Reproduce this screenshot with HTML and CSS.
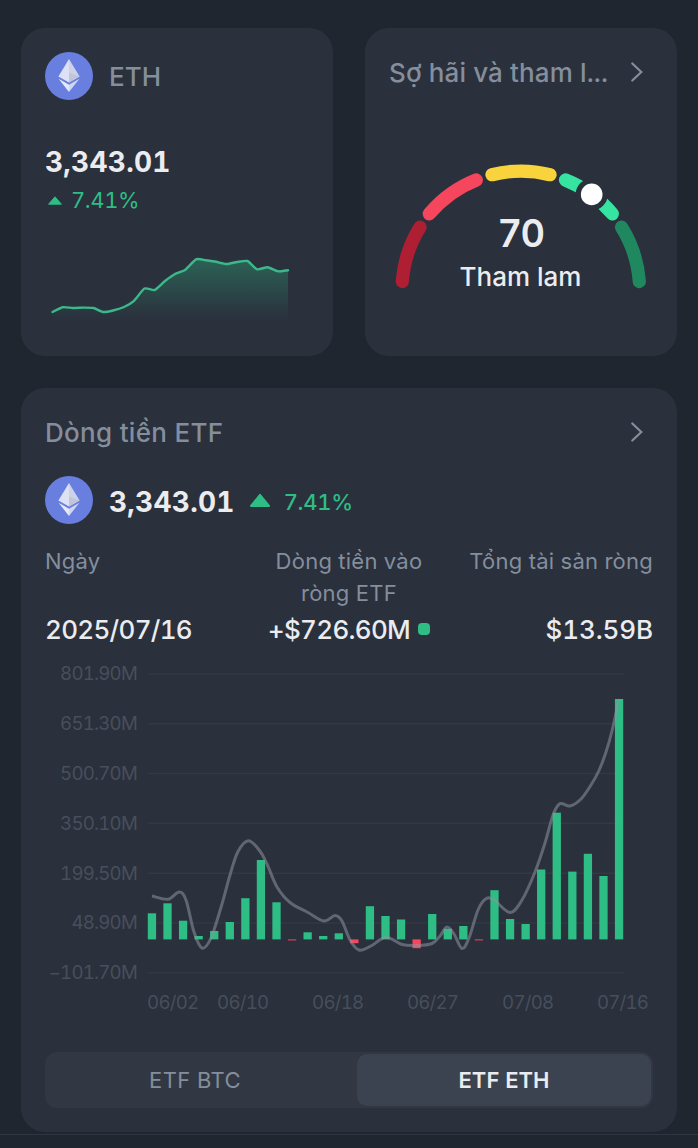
FILE: index.html
```html
<!DOCTYPE html>
<html lang="vi">
<head>
  <meta charset="UTF-8">
  <meta name="viewport" content="width=device-width, initial-scale=1">
  <title>ETF ETH</title>
  <link rel="stylesheet" href="styles.css">
</head>
<body>

  <svg class="defs" width="0" height="0">
    <symbol id="eth" viewBox="0 0 48 48">
      <circle cx="24" cy="24" r="24" fill="#697fe0"/>
      <path d="M24 7L13.4 24.4L24 30.4Z" fill="#dde1f4"/>
      <path d="M24 7L34.6 24.4L24 30.4Z" fill="#cdd2ea"/>
      <path d="M24 20.5L34.6 24.4L24 30.4Z" fill="#c0c5d8"/>
      <path d="M13.6 26.7L24 32.8V40Z" fill="#e6e9fa"/>
      <path d="M34.4 26.7L24 32.8V40Z" fill="#cfd6f5"/>
    </symbol>
    <symbol id="arrow" viewBox="0 0 12 20">
      <path d="M1.3 1.5L10.3 10L1.3 18.5" fill="none" stroke="#848e9c" stroke-width="2.2" stroke-linecap="round"/>
    </symbol>
  </svg>

  <div class="top-cards">
    <div class="card coin">
      <div class="coin-head">
        <svg class="coin-icon"><use href="#eth"/></svg>
        <span class="title">ETH</span>
      </div>
      <div class="price">3,343.01</div>
      <div class="change">
        <svg class="up-small" viewBox="0 0 14 9"><path d="M7 0.8L13.4 8.2H0.6Z" fill="#2ebd85" stroke="#2ebd85" stroke-linejoin="round"/></svg>
        <span>7.41%</span>
      </div>
      <svg class="spark" viewBox="45 250 264 76">
        <defs>
          <linearGradient id="fade" gradientUnits="userSpaceOnUse" x1="0" y1="258" x2="0" y2="320">
            <stop offset="0" stop-color="#2ebd85" stop-opacity="0.36"/>
            <stop offset="1" stop-color="#2ebd85" stop-opacity="0"/>
          </linearGradient>
        </defs>
        <path id="sparkArea" fill="url(#fade)"/>
        <path id="sparkLine" class="spark-line"/>
      </svg>
    </div>

    <div class="card">
      <div class="card-head">
        <span class="title fear">Sợ hãi và tham l...</span>
        <svg class="arrow"><use href="#arrow"/></svg>
      </div>
      <svg class="gauge" viewBox="389 150 264 150">
        <g class="arc">
          <path d="M402.3 281.5A118.8 118.8 0 0 1 420 227.2" stroke="#ae1f34"/>
          <path d="M429.3 213.8A118.8 118.8 0 0 1 476.3 180" stroke="#f6465d"/>
          <path d="M492 174.7A118.8 118.8 0 0 1 550 174.7" stroke="#f9d33b"/>
          <path d="M565.5 180A118.8 118.8 0 0 1 612.3 213.8" stroke="#37e3a0"/>
          <path d="M621.6 227.2A118.8 118.8 0 0 1 639.3 281.5" stroke="#1f885e"/>
        </g>
        <circle cx="591.7" cy="194.4" r="16" fill="#2a303c"/>
        <circle cx="591.7" cy="194.4" r="10.8" fill="#fff"/>
        <text class="score" x="520.5" y="246.5">70</text>
        <text class="mood" x="520.5" y="286">Tham lam</text>
      </svg>
    </div>
  </div>

  <div class="card etf">
    <div class="card-head">
      <span class="title flow">Dòng tiền ETF</span>
      <svg class="arrow"><use href="#arrow"/></svg>
    </div>

    <div class="quote">
      <svg class="coin-icon"><use href="#eth"/></svg>
      <span class="price">3,343.01</span>
      <svg class="up" viewBox="0 0 22 15"><path d="M11 1.8L20 13H2Z" fill="#2ebd85" stroke="#2ebd85" stroke-width="2" stroke-linejoin="round"/></svg>
      <span class="percent">7.41%</span>
    </div>

    <div class="stats">
      <div class="stat">
        <div class="label">Ngày</div>
        <div class="value">2025/07/16</div>
      </div>
      <div class="stat center">
        <div class="label">Dòng tiền vào<br>ròng ETF</div>
        <div class="value">+$726.60M<i class="dot"></i></div>
      </div>
      <div class="stat right">
        <div class="label">Tổng tài sản ròng</div>
        <div class="value">$13.59B</div>
      </div>
    </div>

    <svg class="chart" viewBox="45 655 608 370">
      <g id="grid"></g>
      <g id="bars"></g>
      <path id="trend" class="trend"/>
      <g id="dates"></g>
    </svg>

    <div class="tabs">
      <div class="tab">ETF BTC</div>
      <div class="tab active">ETF ETH</div>
    </div>
  </div>

  <div class="bottom-line"></div>

  <script src="chart.js"></script>
</body>
</html>
```
FILE: styles.css
```css
* {
  box-sizing: border-box;
}

body {
  margin: 0;
  padding: 28px 21px 0;
  height: 1148px;
  overflow: hidden;
  background-color: #1f2630;
  color: #eaecef;
  font-family: Inter, "Noto Sans", sans-serif;
  font-variant-numeric: tabular-nums;
}

svg {
  display: block;
  flex-shrink: 0;
}

.defs {
  position: absolute;
}

.top-cards {
  display: flex;
  gap: 32px;
  margin-bottom: 32px;
}

.card {
  background-color: #2a303c;
  border-radius: 24px;
  padding: 24px;
}

.top-cards .card {
  width: 312px;
  height: 328px;
}

.coin-head {
  display: flex;
  align-items: center;
  gap: 16px;
}

.coin-head .title {
  padding-top: 2px;
}

.coin-icon {
  width: 48px;
  height: 48px;
}

.title {
  color: #848e9c;
  font-size: 26px;
  font-weight: 500;
  line-height: 42px;
  white-space: nowrap;
}

.fear {
  letter-spacing: 0.12px;
}

.flow {
  letter-spacing: 0.3px;
}

.price {
  font-size: 28px;
  font-weight: 700;
  letter-spacing: 0.25px;
  line-height: 40px;
}

.coin .price {
  margin-top: 42px;
}

.change {
  display: flex;
  align-items: center;
  gap: 9px;
  height: 36px;
  padding-left: 3px;
  color: #2ebd85;
  font-size: 22px;
  letter-spacing: -0.4px;
}

.up-small {
  width: 14px;
  height: 9px;
}

.spark {
  width: 264px;
  height: 76px;
  margin-top: 32px;
}

.spark-line {
  fill: none;
  stroke: #3cb98a;
  stroke-width: 2.4;
  stroke-linecap: round;
}

.card-head {
  display: flex;
  align-items: center;
  justify-content: space-between;
  height: 42px;
}

.arrow {
  width: 12px;
  height: 20px;
  margin: 0 10px 2px 0;
}

.gauge {
  width: 264px;
  height: 150px;
  margin-top: 56px;
}

.arc path {
  fill: none;
  stroke-width: 13.3;
  stroke-linecap: round;
}

.gauge text {
  fill: #eaecef;
  text-anchor: middle;
}

.score {
  font-size: 38px;
  font-weight: 600;
  letter-spacing: -1.5px;
}

.mood {
  font-size: 26px;
  font-weight: 500;
}

.etf {
  height: 744px;
}

.quote {
  display: flex;
  align-items: center;
  height: 48px;
  margin-top: 22px;
}

.quote .price {
  margin-left: 16px;
  padding-top: 3px;
}

.up {
  width: 22px;
  height: 15px;
  margin: 0 13px 0 14px;
}

.percent {
  padding-top: 3px;
  color: #2ebd85;
  font-size: 22px;
  font-weight: 500;
  letter-spacing: -0.3px;
}

.stats {
  display: grid;
  grid-template-columns: repeat(3, 1fr);
  height: 124px;
  margin-top: 21px;
}

.stat {
  display: flex;
  flex-direction: column;
  justify-content: space-between;
}

.center {
  align-items: center;
  text-align: center;
}

.right {
  align-items: flex-end;
}

.label {
  color: #848e9c;
  font-size: 22px;
  letter-spacing: 0.25px;
  line-height: 32px;
  white-space: nowrap;
}

.value {
  display: flex;
  align-items: center;
  height: 36px;
  margin-bottom: 22px;
  font-size: 26px;
  font-weight: 500;
  letter-spacing: -0.7px;
}

.right .value {
  letter-spacing: -0.1px;
}

.dot {
  width: 12px;
  height: 12px;
  margin-left: 8px;
  border-radius: 4px;
  background-color: #2ebd85;
}

.chart {
  width: 608px;
  height: 370px;
  margin-top: -14px;
}

.chart text {
  fill: #474f5b;
  font-size: 18.7px;
  letter-spacing: -0.8px;
}

.chart line {
  stroke: #323945;
  stroke-width: 1.5;
}

.trend {
  fill: none;
  stroke: #8c949f;
  stroke-opacity: 0.55;
  stroke-width: 3;
}

.tabs {
  display: flex;
  height: 56px;
  margin-top: 27px;
  padding: 2px;
  border-radius: 12px;
  background-color: #323843;
}

.tab {
  width: 310px;
  padding-right: 14px;
  color: #848e9c;
  font-size: 22px;
  letter-spacing: 0.4px;
  line-height: 52px;
  text-align: center;
}

.tab.active {
  width: 294px;
  padding-right: 0;
  border-radius: 10px;
  background-color: #3b4350;
  color: #eaecef;
  font-weight: 600;
  letter-spacing: 0;
}

.bottom-line {
  height: 1px;
  margin: 2px -21px 0;
  background-color: #2f3541;
}
```
FILE: chart.js
```javascript
const zeroY = 939.4;

// end of every bar, above or below the zero line
const bars = [
  913.3, 903.3, 920.7, 936, 931, 922, 898.2, 860, 902.3, 940.4,
  932.3, 936, 933.3, 943.2, 906.2, 916, 919.5, 948.2, 914, 928.8,
  926, 940.4, 890.2, 919, 924, 869.5, 812.7, 871.6, 853.8, 876, 699
];

const trend = [
  [152, 896], [168, 899.3], [179, 892], [186, 900], [194, 932], [202, 948],
  [211, 938], [221.7, 905], [230, 875], [238, 851.5], [248.5, 840.7],
  [259.5, 850.5], [267, 864], [277, 887], [290, 902.5], [308, 912.5],
  [324, 921], [335, 915.5], [342, 921], [350, 940], [359, 950], [371, 946],
  [386, 937.3], [402, 944.5], [417, 945.5], [432, 943.5], [440, 936],
  [447, 927], [454, 934], [462, 948.5], [469, 938], [478, 910], [486, 898.8],
  [494, 900], [510, 912.5], [522, 900], [535, 872], [545, 843], [553, 815],
  [560, 803.7], [570, 806], [581, 799], [591, 785], [599, 770.5],
  [606, 752], [612, 731], [619, 699]
];

const spark = [
  [52.5, 312], [62.7, 307.2], [73, 308], [83.5, 307.6], [93.5, 308], [103, 312],
  [113, 310.5], [124, 307], [134, 300.8], [144.5, 288.5], [154.5, 290],
  [165, 281], [175, 274], [185, 270], [196, 259.3], [206, 260.3],
  [216, 261.8], [226.5, 264], [237, 262], [247.5, 261], [257, 269.3],
  [267.5, 267.3], [278, 271.3], [288, 270.3]
];

const gridLines = [
  ['801.90M', 674], ['651.30M', 723.7], ['500.70M', 773.5], ['350.10M', 823.3],
  ['199.50M', 873.2], ['48.90M', 923], ['−101.70M', 972.8]
];

const dates = [
  ['06/02', 172.7], ['06/10', 242.7], ['06/18', 337.7],
  ['06/27', 432.5], ['07/08', 527.7], ['07/16', 622.5]
];

function smooth(points, t) {
  let d = 'M' + points[0];
  for (let i = 0; i < points.length - 1; i++) {
    const p0 = points[i - 1] || points[i];
    const p1 = points[i];
    const p2 = points[i + 1];
    const p3 = points[i + 2] || p2;
    d += ` C${p1[0] + (p2[0] - p0[0]) * t} ${p1[1] + (p2[1] - p0[1]) * t}`;
    d += ` ${p2[0] - (p3[0] - p1[0]) * t} ${p2[1] - (p3[1] - p1[1]) * t}`;
    d += ` ${p2[0]} ${p2[1]}`;
  }
  return d;
}

document.getElementById('bars').innerHTML = bars.map((y, i) => {
  const up = y < zeroY;
  return `<rect x="${147.8 + i * 15.57}" y="${Math.min(y, zeroY)}" width="8.3" height="${Math.abs(y - zeroY)}" fill="${up ? '#2ebd85' : '#f6465d'}"/>`;
}).join('');

document.getElementById('grid').innerHTML = gridLines.map(([text, y]) =>
  `<line x1="148" x2="623.5" y1="${y}" y2="${y}"/><text x="137" y="${y + 6.3}" text-anchor="end">${text}</text>`
).join('');

document.getElementById('dates').innerHTML = dates.map(([text, x]) =>
  `<text x="${x}" y="1009" text-anchor="middle">${text}</text>`
).join('');

document.getElementById('trend').setAttribute('d', smooth(trend, 0.167));

const sparkPath = smooth(spark, 0.1);
document.getElementById('sparkLine').setAttribute('d', sparkPath);
document.getElementById('sparkArea').setAttribute('d', sparkPath + ' V320 H52.5 Z');
```
